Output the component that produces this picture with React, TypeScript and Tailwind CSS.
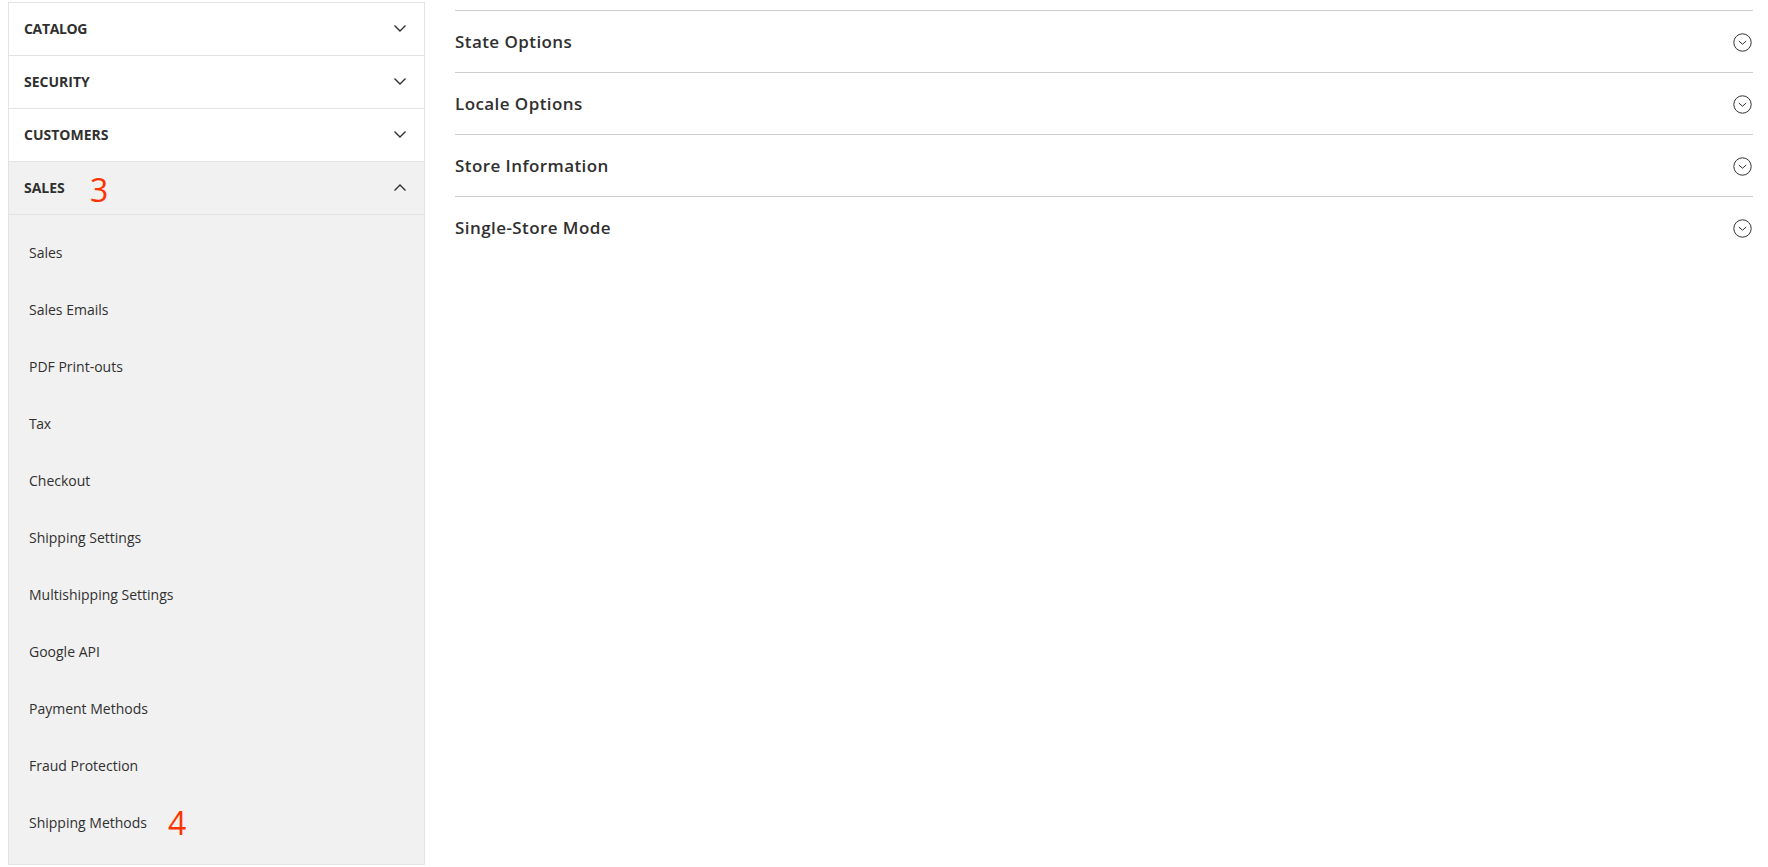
import React from 'react';

const font = { fontFamily: '"Open Sans", sans-serif' };

const collapsedTabs = ['CATALOG', 'SECURITY', 'CUSTOMERS'];
const salesItems = [
  'Sales',
  'Sales Emails',
  'PDF Print-outs',
  'Tax',
  'Checkout',
  'Shipping Settings',
  'Multishipping Settings',
  'Google API',
  'Payment Methods',
  'Fraud Protection',
  'Shipping Methods',
];
const sections = ['State Options', 'Locale Options', 'Store Information', 'Single-Store Mode'];

function Chevron({ up }: { up?: boolean }) {
  return (
    <svg width="14" height="9" viewBox="0 0 14 9" fill="none" stroke="#303030" strokeWidth="1.4">
      <path d={up ? 'M1.5 7.5 L7 2 L12.5 7.5' : 'M1.5 1.5 L7 7 L12.5 1.5'} />
    </svg>
  );
}

function CircleChevron() {
  return (
    <svg className="mt-[2px]" width="19" height="19" viewBox="0 0 19 19" fill="none" stroke="#303030" strokeWidth="1">
      <circle cx="9.5" cy="9.5" r="8.7" />
      <path d="M5.8 8 L9.5 11.2 L13.2 8" />
    </svg>
  );
}

function Annotation({ children, className }: { children: React.ReactNode; className: string }) {
  return <span className={`absolute text-[32px] font-medium leading-none text-[#ff3300] ${className}`}>{children}</span>;
}

export default function App() {
  return (
    <div className="h-[867px] w-[1768px] overflow-hidden bg-white flex text-[#303030]" style={font}>
      <aside className="ml-[8px] mt-[2px] w-[417px] shrink-0 self-start border-x border-t border-[#e3e3e3] box-border">
        {collapsedTabs.map((tab) => (
          <div key={tab} className="h-[53px] border-b border-[#e3e3e3] flex items-center justify-between pl-[15px] pr-[17px] pb-[2px] box-border">
            <span className={tab === 'CATALOG' ? 'text-[14px] font-bold tracking-[-0.35px]' : 'text-[14px] font-bold'}>{tab}</span>
            <Chevron />
          </div>
        ))}
        <div className="relative h-[53px] bg-[#f1f1f1] border-b border-[#e3e3e3] flex items-center justify-between pl-[15px] pr-[17px] pb-[2px] box-border">
          <span className="text-[14px] font-bold">SALES</span>
          <Chevron up />
          <Annotation className="left-[81px] top-[12px]">3</Annotation>
        </div>
        <ul className="bg-[#f1f1f1] pt-[9px] pb-[13px] border-b border-[#e3e3e3]">
          {salesItems.map((item) => (
            <li key={item} className={item === 'Tax' ? 'relative h-[57px] flex items-center pl-[20px] text-[14px] tracking-[-0.4px]' : 'relative h-[57px] flex items-center pl-[20px] text-[14px]'}>
              {item}
              {item === 'Shipping Methods' && <Annotation className="left-[159px] top-[13px]">4</Annotation>}
            </li>
          ))}
        </ul>
      </aside>
      <main className="ml-[30px] mr-[15px] mt-[10px] flex-1">
        {sections.map((section) => (
          <div key={section} className="h-[62px] border-t border-[#cccccc] flex items-center justify-between pr-[1px]">
            <span className="text-[17px] font-semibold tracking-[0.425px]">{section}</span>
            <CircleChevron />
          </div>
        ))}
      </main>
    </div>
  );
}
